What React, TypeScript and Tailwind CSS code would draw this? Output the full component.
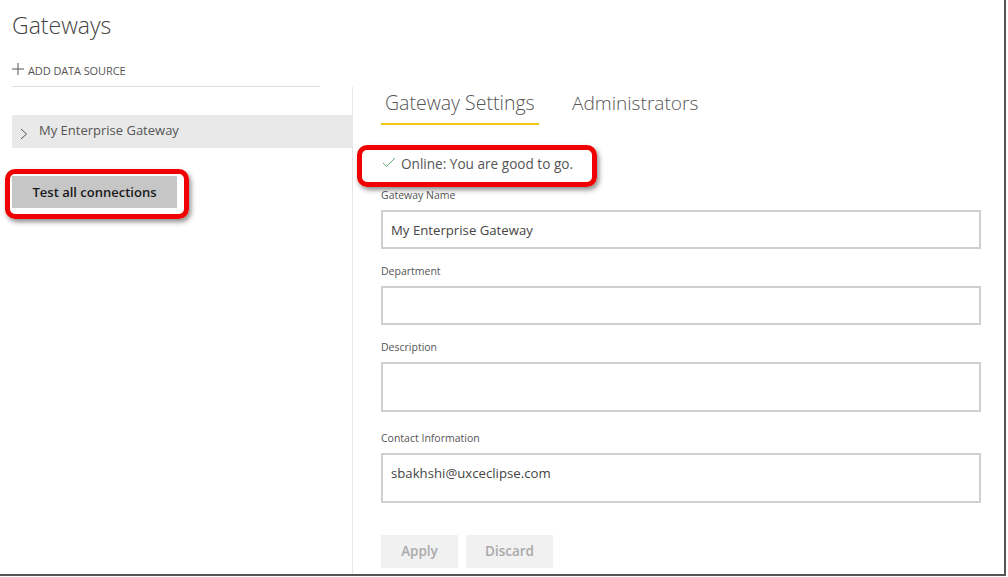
const font = "font-['Open_Sans',sans-serif]";

function Field({ label, value, labelClass, boxClass }: { label: string; value?: string; labelClass: string; boxClass: string }) {
  return (
    <div className="flex flex-col">
      <label className={`text-[10.5px] leading-[14px] text-[#555] ${labelClass}`}>{label}</label>
      <div className={`border-2 border-[#cfcfcf] w-[600px] px-[8px] text-[13.2px] text-[#444] ${boxClass}`}>{value}</div>
    </div>
  );
}

export default function App() {
  return (
    <div className="w-[1008px] h-[577px] bg-white overflow-hidden">
      <div className={`relative w-[1006px] h-[576px] border-r-2 border-b-2 border-[#555] overflow-hidden ${font}`}>
        <h1 className="pl-3 pt-[8px] text-[23px] leading-[34px] font-light text-[#444]">Gateways</h1>

        <div className="flex items-center ml-3 mt-[18px] w-[308px] h-[27px] border-b border-[#dedede] pb-[4px]">
          <svg width="12" height="12" viewBox="0 0 12 12" className="mb-[5px] mr-[4px]">
            <path d="M6 0v12M0 6h12" stroke="#555" strokeWidth="1" fill="none" />
          </svg>
          <span className="text-[11px] text-[#555] tracking-[-0.1px]">ADD DATA SOURCE</span>
        </div>

        <div className="flex">
          <aside className="w-[340px] ml-3 pt-[28px]">
            <div className="flex items-center h-[33px] bg-[#e9e9e9] pl-[8px]">
              <svg width="8" height="12" viewBox="0 0 8 12" className="mt-[4px] mr-[11px]">
                <path d="M1 1l5.5 5L1 11" stroke="#555" strokeWidth="1" fill="none" />
              </svg>
              <span className="text-[13px] text-[#555] -mt-[2px]">My Enterprise Gateway</span>
            </div>
            <button className="flex items-center justify-center mt-[28px] w-[165px] h-[32px] bg-[#c6c6c6] pt-[1px] text-[13px] font-semibold text-[#1a1a1a]">
              Test all connections
            </button>
          </aside>

          <main className="h-[487px] border-l border-[#e6e6e6] pl-[28px]">
            <div className="flex items-start h-[39px] pt-[2px]">
              <div className="w-[158px] h-[36px] border-b-2 border-[#f2c811] pl-[4px] text-[19.5px] leading-[28px] font-light text-[#555]">
                Gateway Settings
              </div>
              <div className="ml-[33px] text-[19.1px] leading-[28px] font-light text-[#555]">Administrators</div>
            </div>

            <div className="flex items-center h-[20px] mt-[28px] pl-[1px] text-[13.6px] text-[#555]">
              <svg width="14" height="11" viewBox="0 0 14 11" className="mr-[5px] -mt-[3px]">
                <path d="M1 6l3.5 3.5L13 1" stroke="#5fae72" strokeWidth="1" fill="none" />
              </svg>
              Online: You are good to go.
            </div>

            <div className="flex flex-col mt-[14px]">
              <Field label="Gateway Name" value="My Enterprise Gateway" labelClass="h-[22px]" boxClass="h-[39px] leading-[37px]" />
              <Field label="Department" labelClass="mt-[15px] h-[22px]" boxClass="h-[39px]" />
              <Field label="Description" labelClass="mt-[15px] h-[22px]" boxClass="h-[50px]" />
              <Field label="Contact Information" value="sbakhshi@uxceclipse.com" labelClass="mt-[19px] h-[22px]" boxClass="h-[50px] leading-[37px]" />
            </div>

            <div className="flex gap-2 mt-[32px]">
              <button className="w-[77px] h-[33px] bg-[#f1f1f1] text-[13.5px] font-semibold text-[#aaa]">Apply</button>
              <button className="w-[87px] h-[33px] bg-[#f1f1f1] text-[13.5px] font-semibold text-[#aaa]">Discard</button>
            </div>
          </main>
        </div>

        <div className="absolute left-[5px] top-[169px] w-[184px] h-[50px] rounded-[10px] border-[5px] border-[#f00000] shadow-[2px_3px_5px_rgba(0,0,0,0.45)]" />
        <div className="absolute left-[357px] top-[145px] w-[240px] h-[42px] rounded-[10px] border-[5px] border-[#f00000] shadow-[2px_3px_5px_rgba(0,0,0,0.45)]" />
      </div>
    </div>
  );
}
